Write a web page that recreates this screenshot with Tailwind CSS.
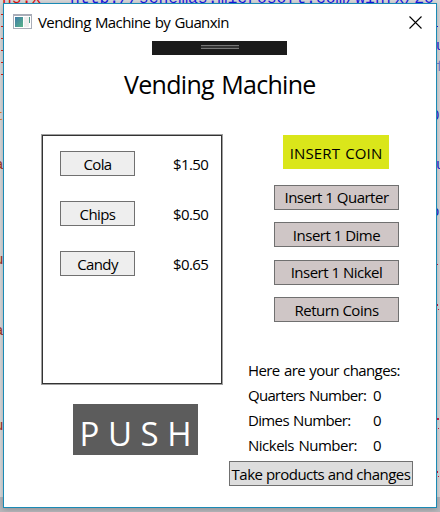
<!DOCTYPE html>
<html lang="en"><head><meta charset="utf-8"><title>Vending Machine by Guanxin</title>
<script src="https://cdn.jsdelivr.net/npm/@tailwindcss/browser@4"></script></head>
<body class="w-[440px] h-[512px] overflow-hidden bg-[#dadadc] font-['Open_Sans','Noto_Sans',sans-serif] text-black">
<div class="relative w-[440px] h-[512px] pt-[3px] pl-[3px] overflow-hidden">
  <div class="absolute inset-x-0 bottom-0 h-[15px] bg-[#b8b8bc]"></div>
  <svg class="absolute inset-0" width="440" height="512" font-family="Liberation Mono, monospace" font-size="14">
    <g font-size="16.4"><text x="2" y="3" fill="#e01010" xml:space="preserve">ns:x</text><text x="70" y="3" fill="#1a1ae8">http://schemas.microsoft.com/winfx/20</text></g>
    <g fill="#e02010"><path d="M1 14h2v1H1zM1 26h2v1H1zM1 38h2v1H1zM1 50h2v1H1zM1 62h2v1H1zM1 74h2v1H1z"/></g>
    <g fill="#a03020"><text x="-5" y="120" fill="#e08020">t</text><text x="-5" y="169">a</text><text x="-5" y="264">u</text><text x="-5" y="335">a</text><text x="-5" y="430">u</text></g>
    <g fill="#1a1ad8"><path d="M437 26h1v1h-1z"/><text x="436" y="50">u</text><text x="436" y="71" fill="#7080d0">f</text><text x="431" y="120">0</text><text x="436" y="169">u</text><text x="431" y="216">o</text></g>
    <g fill="#d01840"><path d="M437 264h1v1h-1zM437 304h1v2h-1zM438 309h1v1h-1zM437 418h2v2h-2zM438 428h1v1h-1zM437 471h1v2h-1zM438 476h1v1h-1z"/></g>
  </svg>
  <main class="relative w-[434px] h-[505px] border border-[#1a8ab5] bg-white shadow-[0_1px_6px_rgba(0,0,0,0.25)]">
    <header class="h-[37px] flex items-center pl-[9px] pr-[14px] pb-px">
      <svg width="20" height="16" viewBox="0 0 20 16"><path fill="#a9adb8" d="M0 0h19v15H0z"/><path fill="#fff" d="M1 2h17v12H1z"/><defs><linearGradient id="g" x2="1" y2="1"><stop stop-color="#3f7aa8"/><stop offset="1" stop-color="#58b489"/></linearGradient></defs><path fill="url(#g)" d="M2 3h8v10H2z"/><path fill="#eee" d="M11 3h5v10h-5z"/><path fill="#4d9a8a" d="M16 3h1v6h-1z"/></svg>
      <h1 class="ml-[5px] text-[15px] leading-[20px] tracking-[-0.6px] [word-spacing:1px] whitespace-nowrap">Vending Machine by Guanxin</h1>
      <svg class="ml-auto" width="13" height="13" viewBox="0 0 13 13"><path d="M.5 .5l12 12M12.5 .5l-12 12" stroke="#000" stroke-width="1.1"/></svg>
    </header>
    <div class="ml-[148px] w-[135px] h-[14px] bg-[#1b1b1b] flex flex-col items-center pt-[4px]"><div class="w-[38px] h-[4px] border-y border-[#777] bg-[#333]"></div></div>
    <h2 class="ml-[120px] mt-[12px] h-[34px] leading-[34px] text-[25px] tracking-[-0.7px] [word-spacing:1.5px] whitespace-nowrap">Vending Machine</h2>
    <div class="flex mt-[33px]">
      <section class="ml-[37px] w-[182px] shrink-0">
        <div class="w-[182px] h-[251px] border border-[#a0a0a0] inset-shadow-[0_0_0_1px_#333] pt-[16px] pl-[18px] flex flex-col gap-[25px] text-[15px] tracking-[-0.6px]">
          <div class="flex items-center"><button class="w-[75px] h-[25px] border border-[#707070] bg-[#eee] pt-px">Cola</button><span class="ml-[38px] pt-px">$1.50</span></div>
          <div class="flex items-center"><button class="w-[75px] h-[25px] border border-[#707070] bg-[#eee] pt-px">Chips</button><span class="ml-[38px] pt-px">$0.50</span></div>
          <div class="flex items-center"><button class="w-[75px] h-[25px] border border-[#707070] bg-[#eee] pt-px">Candy</button><span class="ml-[38px] pt-px">$0.65</span></div>
        </div>
        <button class="block mt-[19px] ml-[32px] w-[125px] h-[51px] bg-[#5c5c5c] text-white text-[33px] leading-[42px] pt-[9px] whitespace-nowrap">P U S H</button>
      </section>
      <section class="ml-[5px] text-[15px] tracking-[-0.5px] [word-spacing:1px] whitespace-nowrap">
        <div class="ml-[55px] mt-px w-[106px] h-[34px] bg-[#dae61a] leading-[36px] tracking-[0.15px] text-center">INSERT COIN</div>
        <div class="ml-[46px] mt-[16px] w-[125px] flex flex-col">
          <button class="h-[25px] border border-[#707070] bg-[#cfc6c6]">Insert 1 Quarter</button>
          <button class="mt-[12px] h-[25px] border border-[#707070] bg-[#cfc6c6] pt-px">Insert 1 Dime</button>
          <button class="mt-[13px] h-[25px] border border-[#707070] bg-[#cfc6c6]">Insert 1 Nickel</button>
          <button class="mt-[12px] h-[25px] border border-[#707070] bg-[#cfc6c6] pt-px">Return Coins</button>
        </div>
        <div class="ml-[20px] mt-[36px] grid grid-cols-[125px_20px] auto-rows-[25px] leading-[25px]">
          <span class="col-span-2 tracking-[-0.6px]">Here are your changes:</span>
          <span class="tracking-[-0.7px]">Quarters Number:</span><span>0</span><span class="tracking-[-0.65px]">Dimes Number:</span><span>0</span><span>Nickels Number:</span><span>0</span>
        </div>
        <button class="block ml-px mt-[3px] w-[184px] h-[25px] border border-[#707070] bg-[#ddd] pt-[2px] leading-[21px]">Take products and changes</button>
      </section>
    </div>
  </main>
</div>
</body></html>
